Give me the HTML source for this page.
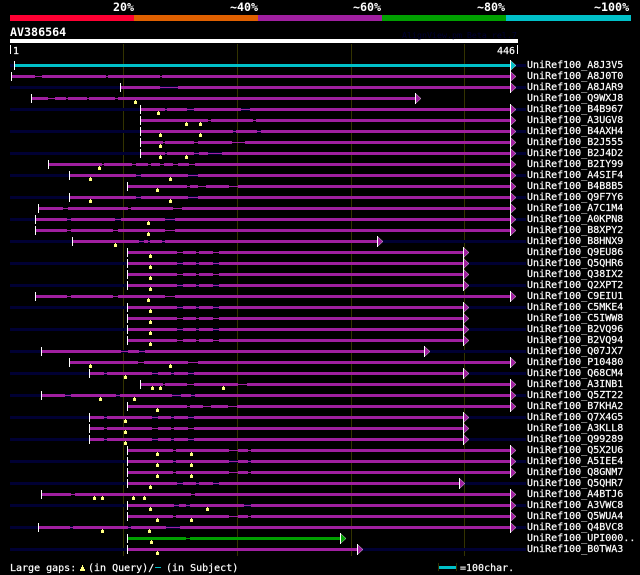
<!DOCTYPE html>
<html><head><meta charset="utf-8"><style>
html,body{margin:0;padding:0;background:#000;width:640px;height:575px;overflow:hidden}
svg{display:block}
text{font-family:"DejaVu Sans Mono","Liberation Mono",monospace;font-size:10px;fill:#fff;stroke:#fff;stroke-width:.2}
.b{font-weight:bold;font-size:11.67px;stroke:none}
</style></head><body>
<svg width="640" height="575" viewBox="0 0 640 575" xmlns="http://www.w3.org/2000/svg">
<rect width="640" height="575" fill="#000"/>
<g>
<rect x="10" y="15" width="124" height="6" fill="#ff0033"/>
<rect x="134" y="15" width="124" height="6" fill="#e06000"/>
<rect x="258" y="15" width="124" height="6" fill="#a01fa0"/>
<rect x="382" y="15" width="124" height="6" fill="#00a000"/>
<rect x="506" y="15" width="125" height="6" fill="#00c0c8"/>
<rect x="10" y="39" width="508" height="4" fill="#fff"/>
<path d="M123.5 44V556M237.5 44V556M351.5 44V556M464.5 44V556" stroke="#333300" fill="none"/>
<path fill="none" stroke="#000033" stroke-width="3" d="M10 65.5H526M10 87.5H526M10 109.5H526M10 131.5H526M10 153.5H526M10 175.5H526M10 197.5H526M10 219.5H526M10 241.5H526M10 263.5H526M10 285.5H526M10 307.5H526M10 329.5H526M10 351.5H526M10 373.5H526M10 395.5H526M10 417.5H526M10 439.5H526M10 461.5H526M10 483.5H526M10 505.5H526M10 527.5H526M10 549.5H526"/>
<path fill="none" stroke="#a01fa0" d="M12 76.5H511M121 87.5H511M32 98.5H415M141 109.5H511M141 120.5H511M141 131.5H511M141 142.5H511M141 153.5H511M49 164.5H511M70 175.5H511M128 186.5H511M70 197.5H511M39 208.5H511M36 219.5H511M36 230.5H511M73 241.5H377M128 252.5H463M128 263.5H463M128 274.5H463M128 285.5H463M36 296.5H511M128 307.5H463M128 318.5H463M128 329.5H463M128 340.5H463M42 351.5H424M70 362.5H511M90 373.5H463M141 384.5H511M42 395.5H511M128 406.5H511M90 417.5H463M90 428.5H463M90 439.5H463M128 450.5H511M128 461.5H511M128 472.5H511M128 483.5H459M42 494.5H511M128 505.5H511M128 516.5H511M39 527.5H511M128 549.5H357"/>
<path fill="none" stroke="#00c0c8" stroke-width="3" d="M15 65.5H511"/>
<path fill="none" stroke="#00a000" stroke-width="1" d="M186 538.5H190"/>
<path fill="none" stroke="#00a000" stroke-width="3" d="M128 538.5H186M190 538.5H340"/>
<path fill="none" stroke="#a01fa0" stroke-width="3" d="
M12 76.5H35M42 76.5H106M108 76.5H160M162 76.5H511
M121 87.5H160M178 87.5H511
M32 98.5H48M55 98.5H66M68 98.5H87M89 98.5H115M118 98.5H415
M141 109.5H165M167 109.5H187M194 109.5H241M250 109.5H511
M141 120.5H208M211 120.5H253M256 120.5H511
M141 131.5H233M236 131.5H257M261 131.5H511
M141 142.5H163M165 142.5H194M198 142.5H232M245 142.5H511
M141 153.5H165M167 153.5H194M199 153.5H208M222 153.5H511
M49 164.5H102M104 164.5H132M136 164.5H148M151 164.5H160M164 164.5H173M178 164.5H189M195 164.5H511
M70 175.5H136M141 175.5H188M198 175.5H511
M128 186.5H187M190 186.5H198M206 186.5H229M238 186.5H511
M70 197.5H136M141 197.5H188M198 197.5H511
M39 208.5H63M68 208.5H128M131 208.5H173M182 208.5H511
M36 219.5H67M71 219.5H115M121 219.5H165M175 219.5H511
M36 230.5H67M71 230.5H113M118 230.5H165M175 230.5H511
M73 241.5H139M144 241.5H148M150 241.5H162M165 241.5H377
M128 252.5H177M183 252.5H196M199 252.5H213M219 252.5H463
M128 263.5H177M183 263.5H196M199 263.5H213M219 263.5H463
M128 274.5H177M183 274.5H196M199 274.5H213M219 274.5H463
M128 285.5H177M183 285.5H196M199 285.5H213M219 285.5H463
M36 296.5H67M71 296.5H113M118 296.5H165M175 296.5H511
M128 307.5H177M183 307.5H196M199 307.5H213M219 307.5H463
M128 318.5H177M183 318.5H196M199 318.5H213M219 318.5H463
M128 329.5H177M183 329.5H196M199 329.5H213M219 329.5H463
M128 340.5H177M183 340.5H196M199 340.5H213M219 340.5H463
M42 351.5H121M128 351.5H139M145 351.5H424
M70 362.5H138M144 362.5H188M198 362.5H511
M90 373.5H104M107 373.5H152M158 373.5H171M174 373.5H188M194 373.5H463
M141 384.5H163M165 384.5H187M194 384.5H238M247 384.5H511
M42 395.5H65M71 395.5H116M120 395.5H172M181 395.5H191M195 395.5H511
M128 406.5H187M190 406.5H203M211 406.5H228M237 406.5H511
M90 417.5H104M107 417.5H152M158 417.5H171M174 417.5H188M194 417.5H463
M90 428.5H104M107 428.5H152M158 428.5H171M174 428.5H188M194 428.5H463
M90 439.5H104M107 439.5H152M158 439.5H171M174 439.5H188M194 439.5H463
M128 450.5H173M176 450.5H229M238 450.5H248M251 450.5H511
M128 461.5H173M176 461.5H229M238 461.5H248M251 461.5H511
M128 472.5H173M176 472.5H229M238 472.5H248M251 472.5H511
M128 483.5H177M183 483.5H196M199 483.5H213M219 483.5H459
M42 494.5H71M75 494.5H191M195 494.5H511
M128 505.5H174M179 505.5H186M190 505.5H244M251 505.5H511
M128 516.5H173M176 516.5H229M238 516.5H248M251 516.5H511
M39 527.5H70M73 527.5H128M131 527.5H166M180 527.5H511
M128 549.5H357"/>
<path fill="#ffff80" d="M135 100h1v1h1v3h-3v-3h1zM158 111h1v1h1v3h-3v-3h1zM186 122h1v1h1v3h-3v-3h1zM200 122h1v1h1v3h-3v-3h1zM160 133h1v1h1v3h-3v-3h1zM200 133h1v1h1v3h-3v-3h1zM160 144h1v1h1v3h-3v-3h1zM160 155h1v1h1v3h-3v-3h1zM186 155h1v1h1v3h-3v-3h1zM99 166h1v1h1v3h-3v-3h1zM90 177h1v1h1v3h-3v-3h1zM170 177h1v1h1v3h-3v-3h1zM157 188h1v1h1v3h-3v-3h1zM90 199h1v1h1v3h-3v-3h1zM170 199h1v1h1v3h-3v-3h1zM148 221h1v1h1v3h-3v-3h1zM148 232h1v1h1v3h-3v-3h1zM115 243h1v1h1v3h-3v-3h1zM150 254h1v1h1v3h-3v-3h1zM150 265h1v1h1v3h-3v-3h1zM150 276h1v1h1v3h-3v-3h1zM150 287h1v1h1v3h-3v-3h1zM148 298h1v1h1v3h-3v-3h1zM150 309h1v1h1v3h-3v-3h1zM150 320h1v1h1v3h-3v-3h1zM150 331h1v1h1v3h-3v-3h1zM150 342h1v1h1v3h-3v-3h1zM90 364h1v1h1v3h-3v-3h1zM170 364h1v1h1v3h-3v-3h1zM125 375h1v1h1v3h-3v-3h1zM152 386h1v1h1v3h-3v-3h1zM160 386h1v1h1v3h-3v-3h1zM223 386h1v1h1v3h-3v-3h1zM100 397h1v1h1v3h-3v-3h1zM134 397h1v1h1v3h-3v-3h1zM157 408h1v1h1v3h-3v-3h1zM125 419h1v1h1v3h-3v-3h1zM125 430h1v1h1v3h-3v-3h1zM125 441h1v1h1v3h-3v-3h1zM157 452h1v1h1v3h-3v-3h1zM191 452h1v1h1v3h-3v-3h1zM157 463h1v1h1v3h-3v-3h1zM191 463h1v1h1v3h-3v-3h1zM157 474h1v1h1v3h-3v-3h1zM191 474h1v1h1v3h-3v-3h1zM150 485h1v1h1v3h-3v-3h1zM94 496h1v1h1v3h-3v-3h1zM102 496h1v1h1v3h-3v-3h1zM133 496h1v1h1v3h-3v-3h1zM144 496h1v1h1v3h-3v-3h1zM150 507h1v1h1v3h-3v-3h1zM207 507h1v1h1v3h-3v-3h1zM157 518h1v1h1v3h-3v-3h1zM191 518h1v1h1v3h-3v-3h1zM102 529h1v1h1v3h-3v-3h1zM149 529h1v1h1v3h-3v-3h1zM151 540h1v1h1v3h-3v-3h1zM157 551h1v1h1v3h-3v-3h1zM82 565h1v2h1v2h1v2h-5v-2h1v-2h1z"/>
<path fill="none" stroke="#fff" d="M10.5 45V54M14.5 61V70M11.5 72V81M120.5 83V92M31.5 94V103M140.5 105V114M140.5 116V125M140.5 127V136M140.5 138V147M140.5 149V158M48.5 160V169M69.5 171V180M127.5 182V191M69.5 193V202M38.5 204V213M35.5 215V224M35.5 226V235M72.5 237V246M127.5 248V257M127.5 259V268M127.5 270V279M127.5 281V290M35.5 292V301M127.5 303V312M127.5 314V323M127.5 325V334M127.5 336V345M41.5 347V356M69.5 358V367M89.5 369V378M140.5 380V389M41.5 391V400M127.5 402V411M89.5 413V422M89.5 424V433M89.5 435V444M127.5 446V455M127.5 457V466M127.5 468V477M127.5 479V488M41.5 490V499M127.5 501V510M127.5 512V521M38.5 523V532M127.5 534V543M127.5 545V554M517.5 45V54"/>
<path d="M155 567h6v1h-6z" fill="#00c0c8"/>
<rect x="439" y="566" width="18" height="3" fill="#00c0c8"/>
<path d="M438.5 563V571M456.5 563V571" stroke="#333300" fill="none"/>
</g>
<defs><g id="a"><path d="M-.5-5L5 0L-.5 5z" stroke="#fff" stroke-width=".4"/><path d="M-.5-5.5V5.5" stroke="#fff" fill="none"/></g></defs>
<g fill="#a01fa0">
<use href="#a" x="511" y="65.5" fill="#00c0c8"/><use href="#a" x="511" y="76.5"/><use href="#a" x="511" y="87.5"/><use href="#a" x="416" y="98.5"/><use href="#a" x="511" y="109.5"/><use href="#a" x="511" y="120.5"/><use href="#a" x="511" y="131.5"/><use href="#a" x="511" y="142.5"/><use href="#a" x="511" y="153.5"/><use href="#a" x="511" y="164.5"/><use href="#a" x="511" y="175.5"/><use href="#a" x="511" y="186.5"/><use href="#a" x="511" y="197.5"/><use href="#a" x="511" y="208.5"/><use href="#a" x="511" y="219.5"/><use href="#a" x="511" y="230.5"/><use href="#a" x="378" y="241.5"/><use href="#a" x="464" y="252.5"/><use href="#a" x="464" y="263.5"/><use href="#a" x="464" y="274.5"/><use href="#a" x="464" y="285.5"/><use href="#a" x="511" y="296.5"/><use href="#a" x="464" y="307.5"/><use href="#a" x="464" y="318.5"/><use href="#a" x="464" y="329.5"/><use href="#a" x="464" y="340.5"/><use href="#a" x="425" y="351.5"/><use href="#a" x="511" y="362.5"/><use href="#a" x="464" y="373.5"/><use href="#a" x="511" y="384.5"/><use href="#a" x="511" y="395.5"/><use href="#a" x="511" y="406.5"/><use href="#a" x="464" y="417.5"/><use href="#a" x="464" y="428.5"/><use href="#a" x="464" y="439.5"/><use href="#a" x="511" y="450.5"/><use href="#a" x="511" y="461.5"/><use href="#a" x="511" y="472.5"/><use href="#a" x="460" y="483.5"/><use href="#a" x="511" y="494.5"/><use href="#a" x="511" y="505.5"/><use href="#a" x="511" y="516.5"/><use href="#a" x="511" y="527.5"/><use href="#a" x="341" y="538.5" fill="#00a000"/><use href="#a" x="358" y="549.5"/>
</g>
<text class="b" x="113" y="11">20%</text>
<text class="b" x="230" y="11">~40%</text>
<text class="b" x="353" y="11">~60%</text>
<text class="b" x="477" y="11">~80%</text>
<text class="b" x="594" y="11">~100%</text>
<text class="b" x="10" y="36">AV386564</text>
<text x="402" y="38" style="fill:#000033;stroke:none;font-size:8.3px">AlignView.pm Beta rel.7</text>
<text x="13" y="54">1</text>
<text x="497" y="54">446</text>
<g>
<text x="527" y="68">UniRef100_A8J3V5</text><text x="527" y="79">UniRef100_A8J0T0</text><text x="527" y="90">UniRef100_A8JAR9</text><text x="527" y="101">UniRef100_Q9WXJ8</text><text x="527" y="112">UniRef100_B4B967</text><text x="527" y="123">UniRef100_A3UGV8</text><text x="527" y="134">UniRef100_B4AXH4</text><text x="527" y="145">UniRef100_B2J555</text><text x="527" y="156">UniRef100_B2J4D2</text><text x="527" y="167">UniRef100_B2IY99</text><text x="527" y="178">UniRef100_A4SIF4</text><text x="527" y="189">UniRef100_B4B8B5</text><text x="527" y="200">UniRef100_Q9F7Y6</text><text x="527" y="211">UniRef100_A7C1M4</text><text x="527" y="222">UniRef100_A0KPN8</text><text x="527" y="233">UniRef100_B8XPY2</text><text x="527" y="244">UniRef100_B8HNX9</text><text x="527" y="255">UniRef100_Q9EU86</text><text x="527" y="266">UniRef100_Q5QHR6</text><text x="527" y="277">UniRef100_Q38IX2</text><text x="527" y="288">UniRef100_Q2XPT2</text><text x="527" y="299">UniRef100_C9EIU1</text><text x="527" y="310">UniRef100_C5MKE4</text><text x="527" y="321">UniRef100_C5IWW8</text><text x="527" y="332">UniRef100_B2VQ96</text><text x="527" y="343">UniRef100_B2VQ94</text><text x="527" y="354">UniRef100_Q07JX7</text><text x="527" y="365">UniRef100_P10480</text><text x="527" y="376">UniRef100_Q68CM4</text><text x="527" y="387">UniRef100_A3INB1</text><text x="527" y="398">UniRef100_Q5ZT22</text><text x="527" y="409">UniRef100_B7KHA2</text><text x="527" y="420">UniRef100_Q7X4G5</text><text x="527" y="431">UniRef100_A3KLL8</text><text x="527" y="442">UniRef100_Q99289</text><text x="527" y="453">UniRef100_Q5X2U6</text><text x="527" y="464">UniRef100_A5IEE4</text><text x="527" y="475">UniRef100_Q8GNM7</text><text x="527" y="486">UniRef100_Q5QHR7</text><text x="527" y="497">UniRef100_A4BTJ6</text><text x="527" y="508">UniRef100_A3VWC8</text><text x="527" y="519">UniRef100_Q5WUA4</text><text x="527" y="530">UniRef100_Q4BVC8</text><text x="527" y="541">UniRef100_UPI000..</text><text x="527" y="552">UniRef100_B0TWA3</text>
</g>
<text x="10" y="571">Large gaps:</text>
<text x="88" y="571">(in Query)/</text>
<text x="166" y="571">(in Subject)</text>
<text x="460" y="571">=100char.</text>
</svg>
</body></html>
